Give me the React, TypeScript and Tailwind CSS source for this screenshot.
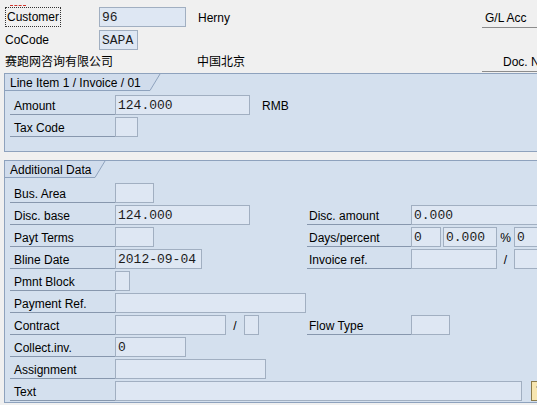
import type { ReactNode } from "react";
import clsx from "clsx";

const sans = "font-['Liberation_Sans','Noto_Sans_CJK_SC',sans-serif]";
const mono = "font-['Liberation_Mono',monospace]";

// input box, SAP style
function Field({ className, value }: { className: string; value?: string }) {
  return (
    <div
      className={clsx(
        "h-[20px] shrink-0 overflow-hidden whitespace-nowrap border border-[#a1afc1] bg-[#dee7f3] pl-[2px] text-[13px] leading-[20px] text-[#1c1c1c]",
        mono,
        className
      )}
    >
      {value}
    </div>
  );
}

// label with the thin underline
function Label({ className, children }: { className: string; children: ReactNode }) {
  return (
    <div
      className={clsx(
        "h-[20px] shrink-0 whitespace-nowrap border-b border-[#8797ad] pt-[3px] text-[12px] leading-[16px] text-black",
        className
      )}
    >
      {children}
    </div>
  );
}

function Sep({ children }: { children: ReactNode }) {
  return (
    <div className="flex h-[20px] w-[17px] shrink-0 items-center justify-center pt-[2px] text-[12px]">
      {children}
    </div>
  );
}

function Row({ children }: { children: ReactNode }) {
  return <div className="flex h-[22px] items-center">{children}</div>;
}

function Left({ children }: { children: ReactNode }) {
  return <div className="flex w-[297px] shrink-0 items-center">{children}</div>;
}

function GroupBox({ title, tab, children }: { title: string; tab: string; children: ReactNode }) {
  return (
    <div className="ml-[4px] w-[560px] border border-[#8ea2bd] bg-[#d4e0ee]">
      <div className="flex h-[17px]">
        <div
          className={clsx(
            "whitespace-nowrap border-b border-[#8ea2bd] bg-[#d0dcec] pl-[5px] pt-[1px] text-[12px] leading-[16px]",
            tab
          )}
        >
          {title}
        </div>
        <svg width="11" height="17" className="shrink-0">
          <path d="M0 0 L10 0 L0 16 Z" fill="#d0dcec" />
          <path d="M0 16.5 L10 0" stroke="#8ea2bd" fill="none" />
        </svg>
      </div>
      {children}
    </div>
  );
}

export default function App() {
  return (
    <div className={clsx("h-[405px] w-[537px] overflow-hidden bg-[#f0f0f0]", sans)}>
      {/* header fields */}
      <div className="flex flex-col pt-[6px] text-[12px]">
        <div className="flex h-[22px] items-center pl-[5px]">
          <div className="relative w-[94px] shrink-0">
            <span className="absolute -top-[2px] left-[5px] h-0 w-[16px] border-t border-dashed border-[#d0342c]" />
            <span className="inline-block border border-dotted border-[#333] px-[1px] pt-[1px] leading-[17px]">
              Customer
            </span>
          </div>
          <Field className="w-[87px]" value="96" />
          <span className="ml-[12px] pt-[1px]">Herny</span>
          <div className="ml-auto w-[55px] shrink-0 border-b border-[#8c8c8c] pl-[3px] pt-[2px] leading-[18px]">
            G/L Acc
          </div>
        </div>
        <div className="flex h-[22px] items-center pl-[5px] pt-[2px]">
          <div className="w-[94px] shrink-0">CoCode</div>
          <Field className="w-[39px] border-[#8f9aa8]" value="SAPA" />
        </div>
        <div className="flex h-[22px] items-center pl-[5px] pt-[2px]">
          <div className="w-[192px] shrink-0">赛跑网咨询有限公司</div>
          <span>中国北京</span>
          <div className="ml-auto w-[55px] shrink-0 overflow-hidden whitespace-nowrap border-b border-[#8c8c8c] pl-[21px] leading-[18px]">
            Doc. N
          </div>
        </div>
      </div>

      <div className="mt-[1px]">
        <GroupBox title="Line Item 1 / Invoice / 01" tab="w-[145px]">
          <div className="flex flex-col pb-[13px] pl-[5px] pt-[3px]">
            <Row>
              <Label className="w-[105px] pl-[4px]">Amount</Label>
              <Field className="w-[135px]" value="124.000" />
              <span className="ml-[12px] pt-[2px] text-[12px]">RMB</span>
            </Row>
            <Row>
              <Label className="w-[105px] pl-[4px]">Tax Code</Label>
              <Field className="w-[23px]" />
            </Row>
          </div>
        </GroupBox>
      </div>

      <div className="mt-[8px]">
        <GroupBox title="Additional Data" tab="w-[90px]">
          <div className="flex flex-col pl-[5px] pt-[4px]">
            <Row>
              <Label className="w-[105px] pl-[4px]">Bus. Area</Label>
              <Field className="w-[39px]" />
            </Row>
            <Row>
              <Left>
                <Label className="w-[105px] pl-[4px]">Disc. base</Label>
                <Field className="w-[135px]" value="124.000" />
              </Left>
              <Label className="w-[104px] pl-[2px]">Disc. amount</Label>
              <Field className="w-[140px]" value="0.000" />
            </Row>
            <Row>
              <Left>
                <Label className="w-[105px] pl-[4px]">Payt Terms</Label>
                <Field className="w-[39px]" />
              </Left>
              <Label className="w-[104px] pl-[2px]">Days/percent</Label>
              <Field className="w-[30px]" value="0" />
              <div className="w-[2px] shrink-0" />
              <Field className="w-[54px]" value="0.000" />
              <Sep>%</Sep>
              <Field className="w-[40px]" value="0" />
            </Row>
            <Row>
              <Left>
                <Label className="w-[105px] pl-[4px]">Bline Date</Label>
                <Field className="w-[87px]" value="2012-09-04" />
              </Left>
              <Label className="w-[104px] pl-[2px]">Invoice ref.</Label>
              <Field className="w-[86px]" />
              <Sep>/</Sep>
              <Field className="w-[40px]" />
            </Row>
            <Row>
              <Label className="w-[105px] pl-[4px]">Pmnt Block</Label>
              <Field className="w-[15px]" />
            </Row>
            <Row>
              <Label className="w-[105px] pl-[4px]">Payment Ref.</Label>
              <Field className="w-[191px]" />
            </Row>
            <Row>
              <Left>
                <Label className="w-[105px] pl-[4px]">Contract</Label>
                <Field className="w-[111px]" />
                <div className="flex h-[20px] w-[18px] shrink-0 items-center justify-center pt-[2px] text-[12px]">/</div>
                <Field className="w-[15px]" />
              </Left>
              <Label className="w-[104px] pl-[2px]">Flow Type</Label>
              <Field className="w-[39px]" />
            </Row>
            <Row>
              <Label className="w-[105px] pl-[4px]">Collect.inv.</Label>
              <Field className="w-[71px]" value="0" />
            </Row>
            <Row>
              <Label className="w-[105px] pl-[4px]">Assignment</Label>
              <Field className="w-[151px]" />
            </Row>
            <Row>
              <Label className="w-[105px] pl-[4px]">Text</Label>
              <Field className="w-[407px]" />
              {/* long text button */}
              <div className="ml-[9px] flex h-[20px] w-[16px] shrink-0 items-start justify-center border border-[#8a7a4a] bg-[#f7e6b0] pt-[2px]">
                <svg width="6" height="6" viewBox="0 0 6 6">
                  <circle cx="3" cy="3" r="2" fill="none" stroke="#555" />
                </svg>
              </div>
            </Row>
          </div>
        </GroupBox>
      </div>
    </div>
  );
}
